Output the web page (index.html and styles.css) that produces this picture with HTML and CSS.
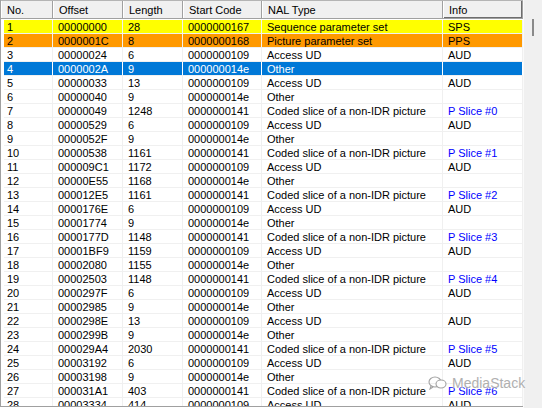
FILE: index.html
```html
<!DOCTYPE html>
<html lang="en">
<head>
<meta charset="UTF-8">
<title>NAL Units</title>
<link rel="stylesheet" href="styles.css">
</head>
<body>

<div class="view">
    <div class="list">
        <!-- Column headers -->
        <div class="head">
            <div class="hc c-no">No.</div>
            <div class="hc c-off">Offset</div>
            <div class="hc c-len">Length</div>
            <div class="hc c-start">Start Code</div>
            <div class="hc c-type">NAL Type</div>
            <div class="hc c-info last">Info</div>
        </div>

        <!-- NAL rows -->
        <div class="rows">
            <div class="row sps"><span class="c-no">1</span><span class="c-off">00000000</span><span class="c-len">28</span><span class="c-start">0000000167</span><span class="c-type">Sequence parameter set</span><span class="c-info">SPS</span></div>
            <div class="row pps"><span class="c-no">2</span><span class="c-off">0000001C</span><span class="c-len">8</span><span class="c-start">0000000168</span><span class="c-type">Picture parameter set</span><span class="c-info">PPS</span></div>
            <div class="row"><span class="c-no">3</span><span class="c-off">00000024</span><span class="c-len">6</span><span class="c-start">0000000109</span><span class="c-type">Access UD</span><span class="c-info">AUD</span></div>
            <div class="row selected"><span class="c-no">4</span><span class="c-off">0000002A</span><span class="c-len">9</span><span class="c-start">000000014e</span><span class="c-type">Other</span><span class="c-info"></span></div>
            <div class="row"><span class="c-no">5</span><span class="c-off">00000033</span><span class="c-len">13</span><span class="c-start">0000000109</span><span class="c-type">Access UD</span><span class="c-info">AUD</span></div>
            <div class="row"><span class="c-no">6</span><span class="c-off">00000040</span><span class="c-len">9</span><span class="c-start">000000014e</span><span class="c-type">Other</span><span class="c-info"></span></div>
            <div class="row"><span class="c-no">7</span><span class="c-off">00000049</span><span class="c-len">1248</span><span class="c-start">0000000141</span><span class="c-type">Coded slice of a non-IDR picture</span><span class="c-info slice">P Slice #0</span></div>
            <div class="row"><span class="c-no">8</span><span class="c-off">00000529</span><span class="c-len">6</span><span class="c-start">0000000109</span><span class="c-type">Access UD</span><span class="c-info">AUD</span></div>
            <div class="row"><span class="c-no">9</span><span class="c-off">0000052F</span><span class="c-len">9</span><span class="c-start">000000014e</span><span class="c-type">Other</span><span class="c-info"></span></div>
            <div class="row"><span class="c-no">10</span><span class="c-off">00000538</span><span class="c-len">1161</span><span class="c-start">0000000141</span><span class="c-type">Coded slice of a non-IDR picture</span><span class="c-info slice">P Slice #1</span></div>
            <div class="row"><span class="c-no">11</span><span class="c-off">000009C1</span><span class="c-len">1172</span><span class="c-start">0000000109</span><span class="c-type">Access UD</span><span class="c-info">AUD</span></div>
            <div class="row"><span class="c-no">12</span><span class="c-off">00000E55</span><span class="c-len">1168</span><span class="c-start">000000014e</span><span class="c-type">Other</span><span class="c-info"></span></div>
            <div class="row"><span class="c-no">13</span><span class="c-off">000012E5</span><span class="c-len">1161</span><span class="c-start">0000000141</span><span class="c-type">Coded slice of a non-IDR picture</span><span class="c-info slice">P Slice #2</span></div>
            <div class="row"><span class="c-no">14</span><span class="c-off">0000176E</span><span class="c-len">6</span><span class="c-start">0000000109</span><span class="c-type">Access UD</span><span class="c-info">AUD</span></div>
            <div class="row"><span class="c-no">15</span><span class="c-off">00001774</span><span class="c-len">9</span><span class="c-start">000000014e</span><span class="c-type">Other</span><span class="c-info"></span></div>
            <div class="row"><span class="c-no">16</span><span class="c-off">0000177D</span><span class="c-len">1148</span><span class="c-start">0000000141</span><span class="c-type">Coded slice of a non-IDR picture</span><span class="c-info slice">P Slice #3</span></div>
            <div class="row"><span class="c-no">17</span><span class="c-off">00001BF9</span><span class="c-len">1159</span><span class="c-start">0000000109</span><span class="c-type">Access UD</span><span class="c-info">AUD</span></div>
            <div class="row"><span class="c-no">18</span><span class="c-off">00002080</span><span class="c-len">1155</span><span class="c-start">000000014e</span><span class="c-type">Other</span><span class="c-info"></span></div>
            <div class="row"><span class="c-no">19</span><span class="c-off">00002503</span><span class="c-len">1148</span><span class="c-start">0000000141</span><span class="c-type">Coded slice of a non-IDR picture</span><span class="c-info slice">P Slice #4</span></div>
            <div class="row"><span class="c-no">20</span><span class="c-off">0000297F</span><span class="c-len">6</span><span class="c-start">0000000109</span><span class="c-type">Access UD</span><span class="c-info">AUD</span></div>
            <div class="row"><span class="c-no">21</span><span class="c-off">00002985</span><span class="c-len">9</span><span class="c-start">000000014e</span><span class="c-type">Other</span><span class="c-info"></span></div>
            <div class="row"><span class="c-no">22</span><span class="c-off">0000298E</span><span class="c-len">13</span><span class="c-start">0000000109</span><span class="c-type">Access UD</span><span class="c-info">AUD</span></div>
            <div class="row"><span class="c-no">23</span><span class="c-off">0000299B</span><span class="c-len">9</span><span class="c-start">000000014e</span><span class="c-type">Other</span><span class="c-info"></span></div>
            <div class="row"><span class="c-no">24</span><span class="c-off">000029A4</span><span class="c-len">2030</span><span class="c-start">0000000141</span><span class="c-type">Coded slice of a non-IDR picture</span><span class="c-info slice">P Slice #5</span></div>
            <div class="row"><span class="c-no">25</span><span class="c-off">00003192</span><span class="c-len">6</span><span class="c-start">0000000109</span><span class="c-type">Access UD</span><span class="c-info">AUD</span></div>
            <div class="row"><span class="c-no">26</span><span class="c-off">00003198</span><span class="c-len">9</span><span class="c-start">000000014e</span><span class="c-type">Other</span><span class="c-info"></span></div>
            <div class="row"><span class="c-no">27</span><span class="c-off">000031A1</span><span class="c-len">403</span><span class="c-start">0000000141</span><span class="c-type">Coded slice of a non-IDR picture</span><span class="c-info slice">P Slice #6</span></div>
            <div class="row"><span class="c-no">28</span><span class="c-off">00003334</span><span class="c-len">414</span><span class="c-start">0000000109</span><span class="c-type">Access UD</span><span class="c-info">AUD</span></div>
        </div>
    </div>

    <!-- Vertical scrollbar -->
    <div class="scroll">
        <div class="thumb"></div>
    </div>

    <!-- Watermark -->
    <div class="watermark">
        <svg width="20" height="14" viewBox="0 0 20 14" fill="none" stroke="#9a9a9a" stroke-width="1.1">
            <ellipse cx="7" cy="6" rx="6" ry="5"/>
            <path d="M3 10 L2 13 L5 11"/>
            <ellipse cx="13" cy="8" rx="5" ry="4" fill="#fff"/>
        </svg>
        <span>MediaStack</span>
    </div>
</div>

</body>
</html>
```

FILE: styles.css
```css
* {
    box-sizing: border-box;
    margin: 0;
    padding: 0;
}

body {
    background: #fff;
    font-family: 'Liberation Sans', Arial, sans-serif;
    font-size: 11px;
    color: #000;
}

.view {
    position: relative;
    display: flex;
    width: 542px;
    height: 408px;
    overflow: hidden;
}

/* List area */
.list {
    width: 523px;
    height: 407px;
    border-left: 1px solid #a0a0a0;
    border-bottom: 1px solid #a0a0a0;
    overflow: hidden;
}

.head {
    display: flex;
    height: 19px;
    border-top: 1px solid #b4b4b4;
    border-bottom: 1px solid #a0a0a0;
    background: #f0f0f0;
    margin-bottom: 1px;
}

.hc {
    height: 17px;
    line-height: 18px;
    padding-left: 5px;
    border-right: 1px solid #a0a0a0;
    border-left: 1px solid #fff;
    white-space: nowrap;
}

.head .c-no { width: 52px; padding-left: 5px; }
.head .last { box-shadow: inset -1px -1px 0 #6d6d6d; }

.rows {
    padding-left: 3px;
}

.row {
    display: flex;
    height: 14px;
    line-height: 14px;
    border-bottom: 1px solid #f0f0f0;
    white-space: nowrap;
}

.row span {
    display: block;
    height: 13px;
    padding-left: 5px;
    border-right: 1px solid #f0f0f0;
    overflow: hidden;
}

/* Column widths */
.c-no { width: 49px; }
.row .c-no { padding-left: 3px; }
.c-off { width: 70px; }
.c-len { width: 60px; }
.c-start { width: 79px; }
.c-type { width: 181px; }
.c-info { width: 80px; }

.head .hc.c-info { width: 80px; }

/* Row states */
.sps { background: #ffff00; }
.pps { background: #ff9900; }

.selected {
    background: #0078d7;
    color: #fff;
}

.selected span { border-right-color: #fff; }

.slice { color: #0000ff; }

/* Scrollbar */
.scroll {
    width: 19px;
    height: 408px;
    background: #f0f0f0;
    border-left: 1px solid #fafafa;
    padding: 19px 0 0 8px;
}

.thumb {
    width: 2px;
    height: 17px;
    background: #8a8a8a;
}

/* Watermark */
.watermark {
    position: absolute;
    left: 428px;
    top: 375px;
    display: flex;
    align-items: center;
    gap: 4px;
    color: #a8a8a8;
    font-size: 14px;
    text-shadow: 0 0 2px #fff, 0 0 1px #fff;
    opacity: 0.9;
}
```
